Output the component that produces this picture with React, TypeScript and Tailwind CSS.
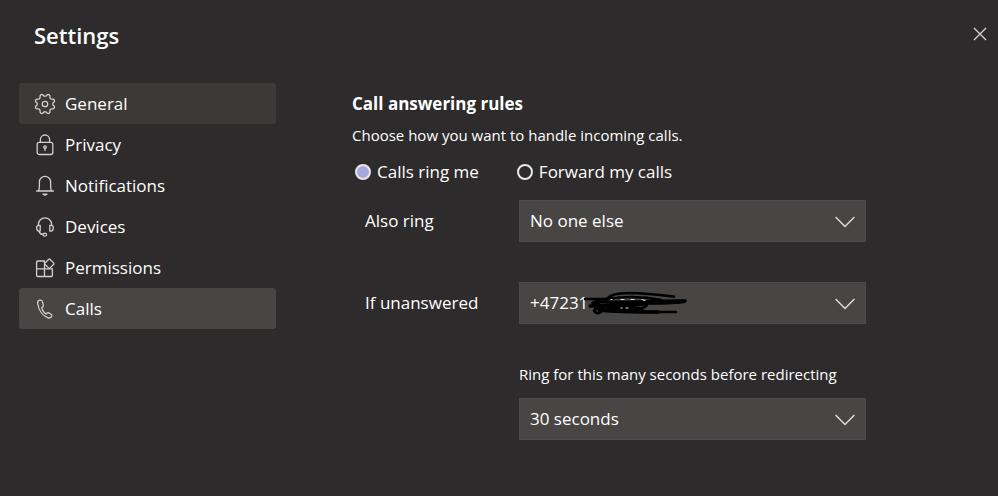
import type { ReactNode } from "react";
import { useState } from "react";

const fontStack = "font-['Open_Sans','Noto_Sans',sans-serif]";

// Outline of a gear with eight rounded teeth and a notch at the top.
const gearOutline =
  Array.from({ length: 97 }, (_, i) => {
    const angle = (i / 96) * 2 * Math.PI;
    const wave = Math.cos(8 * angle);
    const radius = 8.9 - 1.2 * Math.sign(wave) * Math.sqrt(Math.abs(wave));
    const x = 11 + radius * Math.sin(angle);
    const y = 11 - radius * Math.cos(angle);
    return `${i === 0 ? "M" : "L"}${x.toFixed(2)} ${y.toFixed(2)}`;
  }).join("") + "Z";

function Icon({ children }: { children: ReactNode }) {
  return (
    <svg
      viewBox="0 0 22 22"
      className="size-[22px] shrink-0"
      fill="none"
      stroke="#d2d0ce"
      strokeWidth="1.3"
      strokeLinecap="round"
      strokeLinejoin="round"
      aria-hidden="true"
    >
      {children}
    </svg>
  );
}

const items: { name: string; icon: ReactNode }[] = [
  {
    name: "General",
    icon: (
      <>
        <path d={gearOutline} />
        <circle cx="11" cy="11" r="2.7" />
      </>
    ),
  },
  {
    name: "Privacy",
    icon: (
      <>
        <rect x="3.2" y="8.3" width="15.6" height="12.2" rx="2" />
        <path d="M6.4 8.2V5.600a4.600 4.600 0 0 1 9.200 0v2.600" />
        <circle cx="11" cy="13.1" r="1.3" />
        <path d="M11 14.5v2" />
      </>
    ),
  },
  {
    name: "Notifications",
    icon: (
      <>
        <path d="M2.600 16h16.800M4.500 15.900c.7-1.500.9-2.700.9-5V7a5.600 5.600 0 0 1 11.200 0v3.900c0 2.300.2 3.500.9 5" />
        <path d="M9 19.100h4l-2 1.200z" />
      </>
    ),
  },
  {
    name: "Devices",
    icon: (
      <>
        <path d="M4.400 9.300V8.400a6.600 6.600 0 0 1 13.200 0v.9" />
        <path d="M6.200 9.400H4.700c-1.900 0-2 1.200-2 2.400 0 1.700.5 3.300 2.400 3.300h1.100zM15.800 9.400h1.500c1.900 0 2 1.200 2 2.400 0 1.700-.5 3.300-2.400 3.300h-1.100z" />
        <path d="M5 15.200c.6 2 2 3.100 4 3.300" />
        <ellipse cx="10.8" cy="18.7" rx="1.8" ry="1.5" />
      </>
    ),
  },
  {
    name: "Permissions",
    icon: (
      <>
        <path d="M10.500 4H3.600a1 1 0 0 0-1 1v13.500a1 1 0 0 0 1 1h13.800a1 1 0 0 0 1-1v-6.700H2.800M10.500 4.200v15.200" />
        <path d="M14.800 2.200 10.900 6.100a.8.8 0 0 0 0 1.100l3.900 3.900a.8.8 0 0 0 1.100 0l3.900-3.900a.8.8 0 0 0 0-1.100l-3.900-3.900a.8.8 0 0 0-1.100 0z" />
      </>
    ),
  },
  {
    name: "Calls",
    icon: (
      <path d="M5 2.400C3.800 2.800 3.500 4 3.800 6c.9 6.200 4.900 11.800 10.200 13.800 1.800.7 3.400-.4 3.800-1.900.2-.8-.1-1.300-.8-1.700l-2.200-1.300c-.8-.5-1.400-.2-1.900.3l-.9.8c-2.200-1.300-3.600-3.500-4.400-6.300l1.100-.7c.6-.4.8-.9.6-1.600l-.8-3.700C8.200 2.400 6.800 1.800 5 2.400z" />
    ),
  },
];

function Dropdown({ id, options }: { id: string; options: string[] }) {
  return (
    <div className="relative">
      <select
        id={id}
        className="block h-[42px] w-full appearance-none border border-[#4d4b49] bg-[#484644] pr-10 pl-[10px] text-[17px] text-white outline-none"
      >
        {options.map((option) => (
          <option key={option}>{option}</option>
        ))}
      </select>
      <svg
        viewBox="0 0 20 12"
        className="pointer-events-none absolute top-4 right-[11px] h-3 w-5"
        fill="none"
        stroke="#e1dfdd"
        strokeWidth="1.4"
        aria-hidden="true"
      >
        <path d="M.6 1L10 10.4 19.4 1" />
      </svg>
    </div>
  );
}

function Scribble() {
  return (
    <svg
      viewBox="0 0 108 26"
      className="pointer-events-none absolute top-[9px] left-[62px] h-[26px] w-[108px]"
      fill="none"
      stroke="#000"
      strokeWidth="2.6"
      strokeLinecap="round"
      strokeLinejoin="round"
      aria-hidden="true"
    >
      <path d="M4 8C12 8 19 8.500 29 7.500C40 6 61 5 80 9" />
      <path d="M27 7C30 3 38 2.200 48 2C65 2.300 78 3.800 93 5.500" />
      <path d="M104 10C80 9 50 13 15 10.500M9 15C28 15 49 14 67 12C82 12 97 12 104 10" strokeWidth="3.4" />
      <path d="M13 20C16 13 26 17 21 20C17 24 13 22 14 18C29 11 51 18 66 12C67 18 53 19 38 18C49 22 71 21 95 21" />
      <path d="M18 19C36 21 55 21 77 21M12 12C30 20 46 15 61 18" strokeWidth="3.6" />
      <path d="M30 8.500h1M40 8.500h3M50 8.500h3M61 8.500l3 1M40 17h1M45 17h2" stroke="#ddd" strokeWidth="1.2" />
    </svg>
  );
}

export default function App() {
  const [rule, setRule] = useState("ring");
  const radio =
    "size-4 shrink-0 appearance-none rounded-full border-2 border-[#e8e8e8] checked:bg-[#a6a7dc]";

  return (
    <div className={`min-h-screen bg-[#2d2b2b] text-white ${fontStack}`}>
      <header className="flex items-start justify-between pt-5 pr-[10px] pl-[34px]">
        <h1 className="text-[22px] leading-[30px] font-semibold">Settings</h1>
        <button type="button" aria-label="Close" className="mt-[6px]">
          <svg viewBox="0 0 16 16" className="size-4" stroke="#d2d0ce" strokeWidth="1.4" aria-hidden="true">
            <path d="M2 2l12 12M14 2L2 14" />
          </svg>
        </button>
      </header>

      <div className="flex items-start pr-6 pl-[19px]">
        <nav aria-label="Settings" className="mt-[33px] w-[257px] shrink-0">
          {items.map((item) => (
            <button
              key={item.name}
              type="button"
              aria-current={item.name === "Calls" ? "page" : undefined}
              className={`flex h-[41px] w-full items-center gap-[9px] rounded-[3px] pl-[15px] text-left text-[17px] ${
                item.name === "Calls"
                  ? "bg-[#484644]"
                  : item.name === "General"
                    ? "bg-[#3b3a39]"
                    : ""
              }`}
            >
              <Icon>{item.icon}</Icon>
              {item.name}
            </button>
          ))}
        </nav>

        <main className="mt-[42px] ml-[76px] max-w-[514px] flex-1">
          <h2 id="rules-title" className="text-[17px] leading-6 font-bold">
            Call answering rules
          </h2>
          <p className="mt-[7px] text-[15px] leading-6">Choose how you want to handle incoming calls.</p>

          <div
            role="radiogroup"
            aria-labelledby="rules-title"
            className="mt-[13px] flex gap-[38px] pl-[3px] text-[17px] leading-6"
          >
            <label className="flex items-center gap-[6px]">
              <input type="radio" name="rule" className={radio} checked={rule === "ring"} onChange={() => setRule("ring")} />
              Calls ring me
            </label>
            <label className="flex items-center gap-[6px]">
              <input type="radio" name="rule" className={radio} checked={rule === "forward"} onChange={() => setRule("forward")} />
              Forward my calls
            </label>
          </div>

          <div className="mt-4 grid grid-cols-[154px_1fr] items-center gap-y-10 pl-[13px] text-[17px]">
            <label htmlFor="also-ring">Also ring</label>
            <Dropdown id="also-ring" options={["No one else"]} />
            <label htmlFor="unanswered">If unanswered</label>
            <div className="relative">
              <Dropdown id="unanswered" options={["+47231"]} />
              <Scribble />
            </div>
          </div>

          <div className="mt-[38px] pl-[167px]">
            <label htmlFor="seconds" className="mb-3 block text-[15px] leading-6">
              Ring for this many seconds before redirecting
            </label>
            <Dropdown id="seconds" options={["30 seconds"]} />
          </div>
        </main>
      </div>
    </div>
  );
}
